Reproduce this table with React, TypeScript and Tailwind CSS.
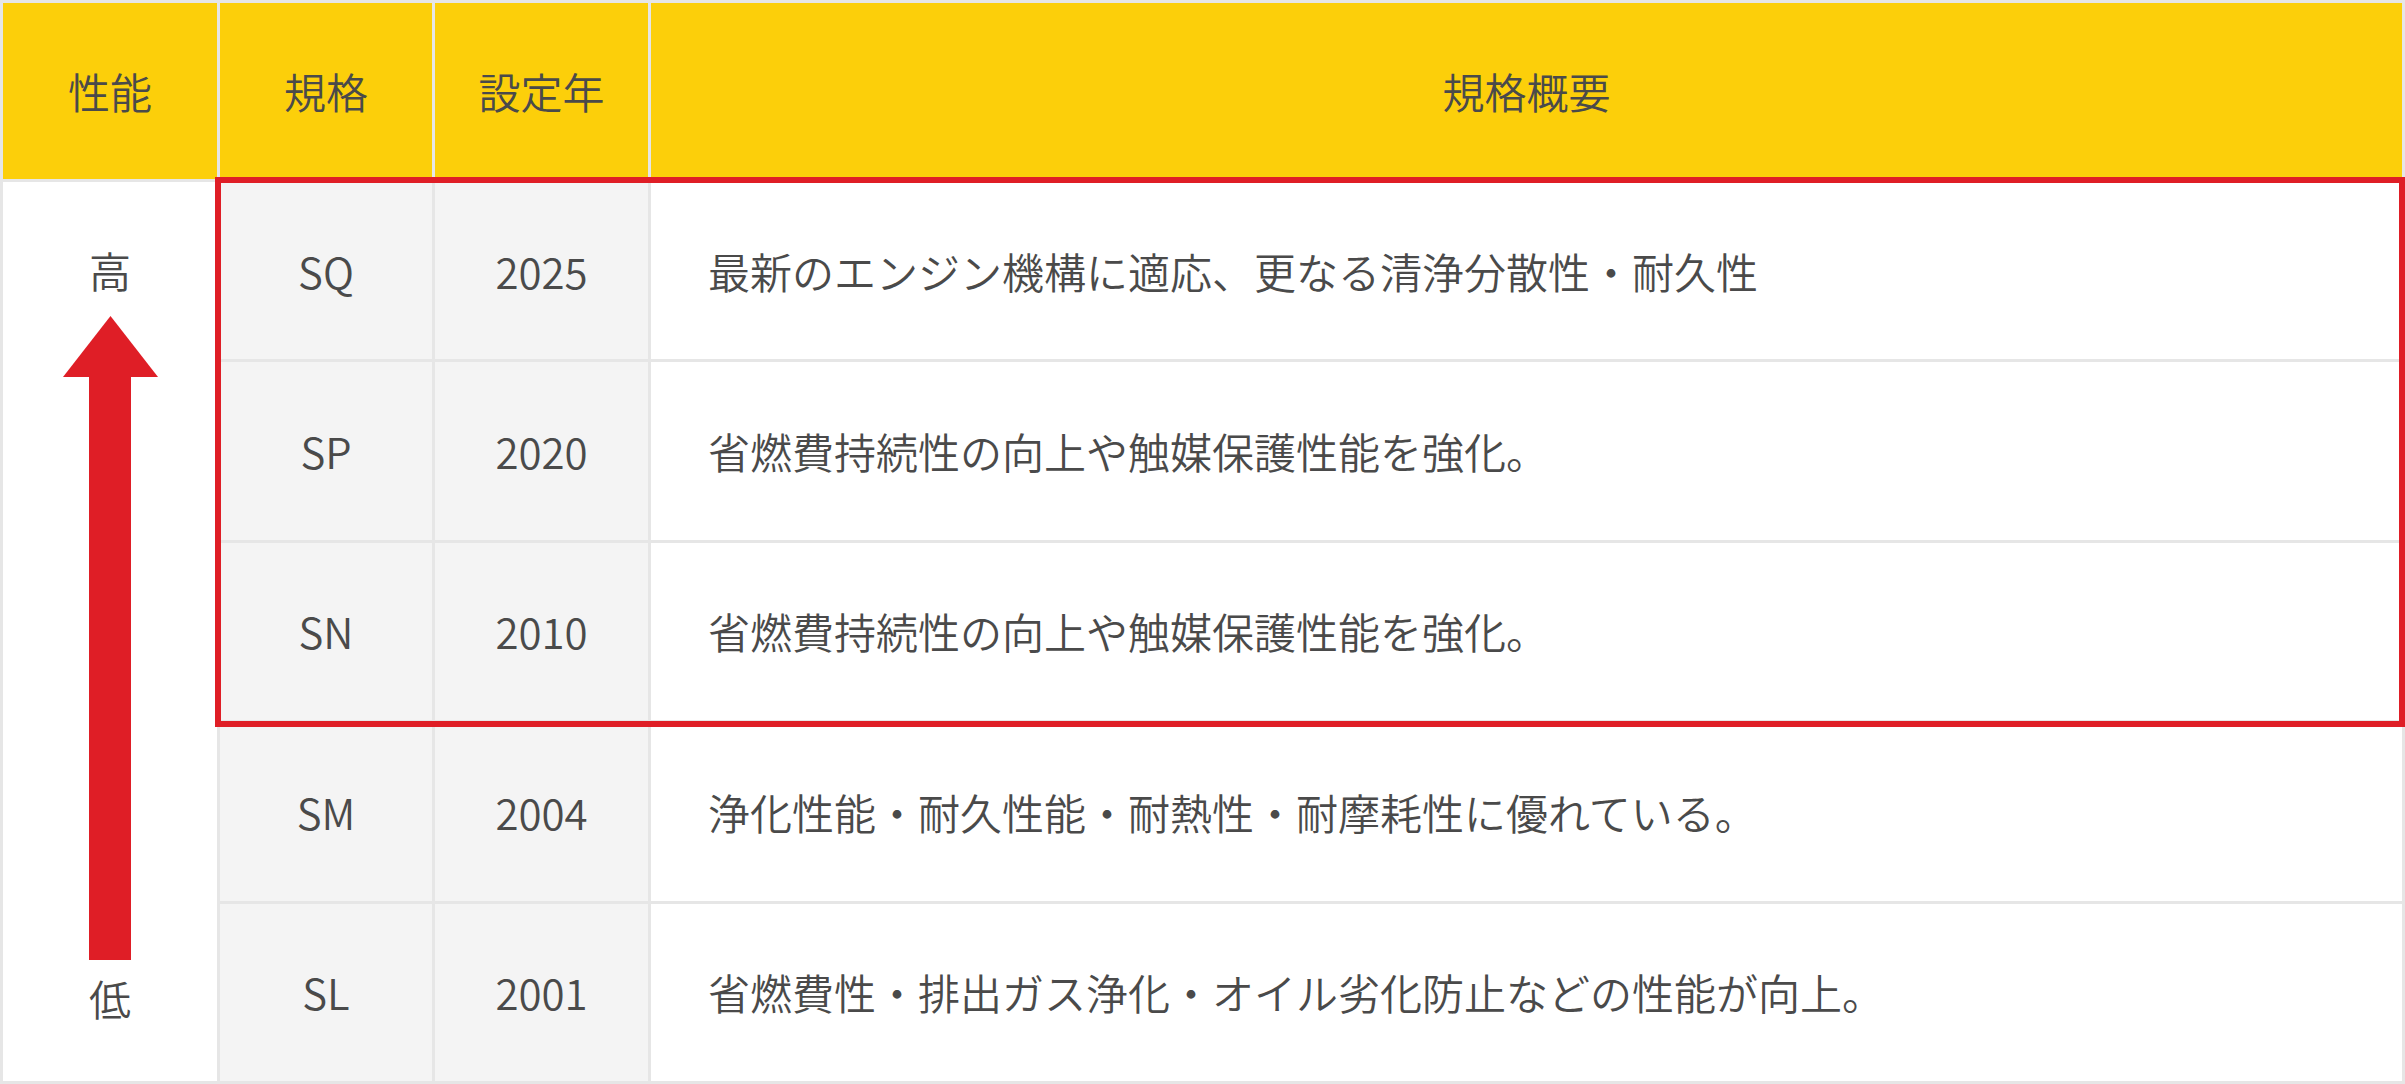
import React from "react";

const rows = [
  { std: "SQ", year: "2025", desc: "最新のエンジン機構に適応、更なる清浄分散性・耐久性" },
  { std: "SP", year: "2020", desc: "省燃費持続性の向上や触媒保護性能を強化。" },
  { std: "SN", year: "2010", desc: "省燃費持続性の向上や触媒保護性能を強化。" },
  { std: "SM", year: "2004", desc: "浄化性能・耐久性能・耐熱性・耐摩耗性に優れている。" },
  { std: "SL", year: "2001", desc: "省燃費性・排出ガス浄化・オイル劣化防止などの性能が向上。" },
];

function Arrow() {
  return (
    <svg width="95" height="644" viewBox="0 0 95 644" className="block">
      <polygon points="47.5,0 95,61 0,61" fill="#df1e26" />
      <rect x="26" y="60" width="42" height="584" fill="#df1e26" />
    </svg>
  );
}

export default function App() {
  return (
    <div
      className="relative w-[2405px] h-[1084px] bg-white text-[#4a4a4a] font-[350]"
      style={{ fontFamily: '"Noto Sans CJK JP", "Noto Sans", sans-serif' }}
    >
      <div className="grid h-full grid-cols-[214px_212px_213px_1fr] grid-rows-[176px_repeat(5,1fr)] gap-[3px] bg-[#e6e6e6] p-[3px] text-[42px] leading-none">
        <div className="flex items-center justify-center bg-[#fccf0a]">性能</div>
        <div className="flex items-center justify-center bg-[#fccf0a]">規格</div>
        <div className="flex items-center justify-center bg-[#fccf0a]">設定年</div>
        <div className="flex items-center justify-center bg-[#fccf0a]">規格概要</div>

        <div className="row-span-5 flex flex-col items-center bg-white pt-[67px]">
          <div>高</div>
          <div className="mt-[25px]">
            <Arrow />
          </div>
          <div className="mt-[17px]">低</div>
        </div>

        {rows.map((r, i) => (
          <React.Fragment key={i}>
            <div className="flex items-center justify-center bg-[#f4f4f4]">{r.std}</div>
            <div className="flex items-center justify-center bg-[#f4f4f4]">{r.year}</div>
            <div className="flex items-center bg-white pl-[57px]">{r.desc}</div>
          </React.Fragment>
        ))}
      </div>

      <div className="pointer-events-none absolute left-[215px] top-[177px] h-[550px] w-[2190px] border-[6px] border-[#df1e26]" />
    </div>
  );
}
